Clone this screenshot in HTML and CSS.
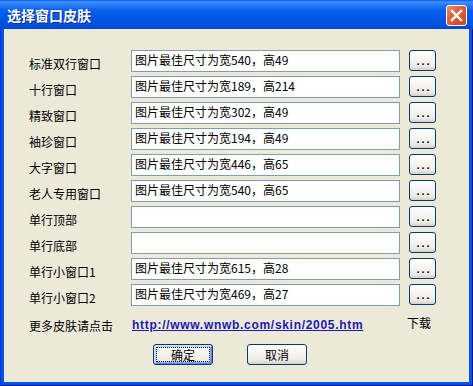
FILE: index.html
```html
<!DOCTYPE html>
<html>
<head>
<meta charset="utf-8">
<link rel="stylesheet" href="styles.css">
</head>
<body>
<div class="window">
  <div class="titlebar">
    <span class="title">选择窗口皮肤</span>
    <span class="close">
      <svg width="21" height="21" viewBox="0 0 21 21">
        <path d="M6 6 L15 15 M15 6 L6 15" stroke="#fff" stroke-width="2.4" stroke-linecap="square"/>
      </svg>
    </span>
  </div>
  <div class="body">
    <div class="grid">
      <div class="lbl">标准双行窗口</div><div class="field">图片最佳尺寸为宽540，高49</div><div class="btn dots">...</div>
      <div class="lbl">十行窗口</div><div class="field">图片最佳尺寸为宽189，高214</div><div class="btn dots">...</div>
      <div class="lbl">精致窗口</div><div class="field">图片最佳尺寸为宽302，高49</div><div class="btn dots">...</div>
      <div class="lbl">袖珍窗口</div><div class="field">图片最佳尺寸为宽194，高49</div><div class="btn dots">...</div>
      <div class="lbl">大字窗口</div><div class="field">图片最佳尺寸为宽446，高65</div><div class="btn dots">...</div>
      <div class="lbl">老人专用窗口</div><div class="field">图片最佳尺寸为宽540，高65</div><div class="btn dots">...</div>
      <div class="lbl">单行顶部</div><div class="field"></div><div class="btn dots">...</div>
      <div class="lbl">单行底部</div><div class="field"></div><div class="btn dots">...</div>
      <div class="lbl">单行小窗口1</div><div class="field">图片最佳尺寸为宽615，高28</div><div class="btn dots">...</div>
      <div class="lbl">单行小窗口2</div><div class="field">图片最佳尺寸为宽469，高27</div><div class="btn dots">...</div>
    </div>
    <div class="grid linkrow">
      <div class="lbl2">更多皮肤请点击</div><a class="link" href="#">http://www.wnwb.com/skin/2005.htm</a><div class="dl">下载</div>
    </div>
    <div class="actions">
      <div class="btn big default"><span class="focus">确定</span></div>
      <div class="btn big">取消</div>
    </div>
  </div>
</div>
</body>
</html>
```
FILE: styles.css
```css
html, body {
  margin: 0;
  padding: 0;
  background: #ECE9D8;
}
.window {
  width: 473px;
  height: 386px;
  box-sizing: border-box;
  background: #0055E5;
  display: flex;
  flex-direction: column;
  font-family: "Noto Sans CJK SC", "Noto Sans", sans-serif;
  font-size: 12px;
  color: #000;
  box-shadow: inset 1px 0 0 #0831D9, inset -1px 0 0 #00138C, inset 0 -1px 0 #00138C;
}
.titlebar {
  height: 29px;
  flex: none;
  display: flex;
  align-items: center;
  justify-content: space-between;
  padding: 0 6px 0 7px;
  background: linear-gradient(to bottom, #0A5AEE 0px, #3E92FF 2px, #2A7BF5 5px, #0961EE 10px, #0558E6 16px, #0052E0 24px, #0048D2 29px);
}
.title {
  color: #fff;
  font-weight: bold;
  font-size: 14px;
  text-shadow: 1px 1px 0 #0A2A8C;
  padding-top: 1px;
}
.close {
  width: 21px;
  height: 21px;
  box-sizing: border-box;
  border: 1px solid #fff;
  border-radius: 3px;
  background: linear-gradient(135deg, #EE8A6C 0%, #E0613C 40%, #CC4520 100%);
  display: flex;
  margin-top: 2px;
}
.close svg {
  margin: -1px;
}
.body {
  flex: 1;
  margin: 0 4px 4px 4px;
  background: #ECE9D8;
  padding: 21px 0 0 25px;
}
.grid {
  display: grid;
  grid-template-columns: 102px 269px 27px;
  grid-auto-rows: 22px;
  row-gap: 4px;
}
.grid > .btn {
  margin-left: 9px;
}
.lbl {
  padding-top: 3px;
  line-height: 22px;
  white-space: nowrap;
}
.field {
  box-sizing: border-box;
  border: 1px solid #7F9DB9;
  background: #fff;
  padding: 1px 0 0 3px;
  line-height: 16px;
  white-space: nowrap;
}
.btn {
  box-sizing: border-box;
  border: 1px solid #003C74;
  border-radius: 3px;
  background: linear-gradient(to bottom, #FFFFFF 0%, #F6F5F1 40%, #ECEBE6 80%, #D6D0C5 100%);
  display: flex;
  align-items: center;
  justify-content: center;
}
.dots {
  width: 27px;
  height: 21px;
  font-family: "Liberation Sans", sans-serif;
  font-weight: bold;
  font-size: 11px;
  letter-spacing: 2px;
  padding: 2px 0 0 3px;
  line-height: 1;
}
.linkrow {
  margin-top: 10px;
  grid-auto-rows: 18px;
}
.lbl2 {
  line-height: 18px;
  white-space: nowrap;
  padding-top: 1px;
}
.link {
  color: #1B1BB4;
  font-family: "Liberation Sans", sans-serif;
  font-weight: bold;
  font-size: 12px;
  letter-spacing: 0.7px;
  line-height: 18px;
  text-decoration: underline;
  white-space: nowrap;
  padding-left: 1px;
}
.dl {
  margin-left: 7px;
  line-height: 14px;
  white-space: nowrap;
}
.actions {
  display: flex;
  gap: 34px;
  padding-left: 124px;
  margin-top: 10px;
}
.big {
  width: 60px;
  height: 21px;
  line-height: 16px;
}
.default {
  box-shadow: inset 1px 1px 0 #CEE7FF, inset -1px -1px 0 #6982EE, inset 2px 2px 0 #BCD4F6, inset -2px -2px 0 #89ADE4;
}
.focus {
  box-sizing: border-box;
  width: 54px;
  height: 15px;
  border: 1px dotted #000;
  text-align: center;
  line-height: 13px;
}
```
